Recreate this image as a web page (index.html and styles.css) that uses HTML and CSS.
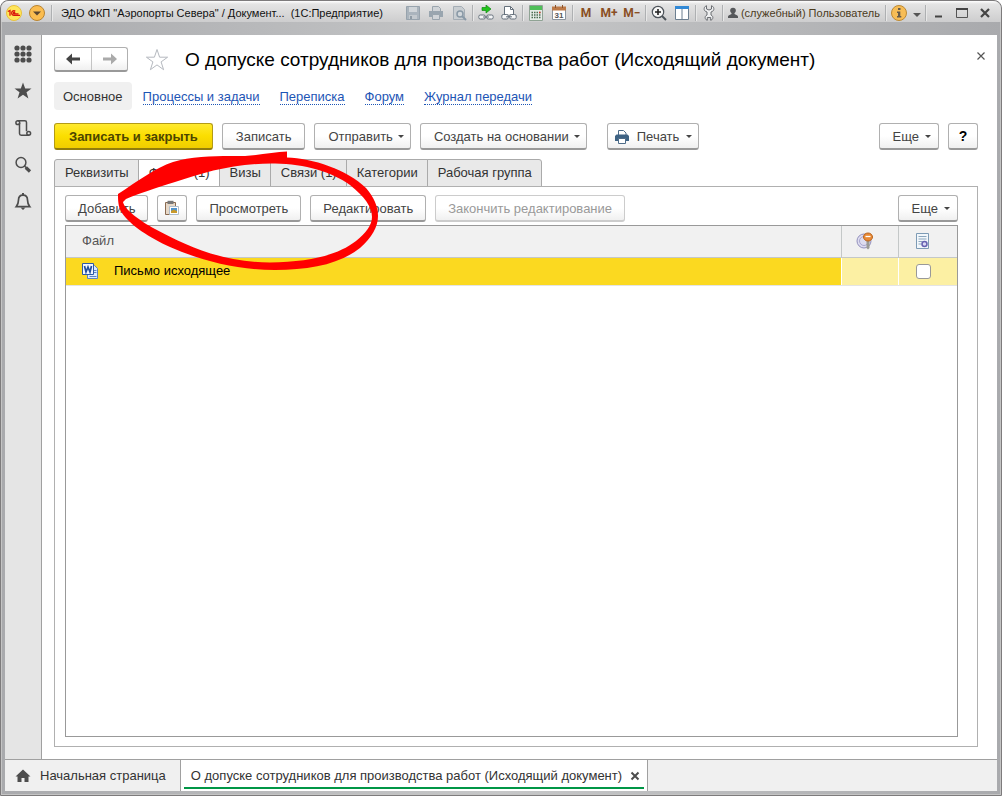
FILE: index.html
```html
<!DOCTYPE html>
<html lang="ru">
<head>
<meta charset="utf-8">
<title>ЭДО ФКП "Аэропорты Севера"</title>
<link rel="stylesheet" href="styles.css">
</head>
<body>
<div class="window">
  <header class="titlebar">
    <svg class="round" viewBox="0 0 16 16"><circle cx="8" cy="8" r="7.500" fill="#ffe65a" stroke="#e8c13c"/><path d="M1.800 6.500L4 5.500V10.800M9.300 6.200a2.300 2.300 0 1 0-.8 4.100H14M8.800 8.200a.7.700 0 1 0-.8.700h4.500" fill="none" stroke="#d9150c" stroke-width="1.300"/></svg>
    <button class="tool menu" aria-label="Главное меню"><svg class="round" viewBox="0 0 16 16"><circle cx="8" cy="8" r="7.500" fill="#fbbd50" stroke="#b98431"/><path d="M4 6.500h8L8 10.500z" fill="#5b4630"/></svg></button>
    <span class="sep"></span>
    <span class="caption">ЭДО ФКП "Аэропорты Севера" / Документ...&nbsp; (1С:Предприятие)</span>
    <div class="tools">
      <button class="tool" aria-label="Сохранить" disabled><svg viewBox="0 0 16 16"><path d="M1.500 1.500h13v13h-13z" fill="#aab4bd" stroke="#97a3ad"/><path d="M4 2h8v5H4z" fill="#d0d5d9"/><path d="M4 10h8v4H4z" fill="#c3c9ce"/><path d="M5 11h2v3H5z" fill="#8f9ba5"/></svg></button>
      <button class="tool" aria-label="Печать" disabled><svg viewBox="0 0 16 16"><path d="M4.500 6V1.500h6l2 2V6" fill="#d0d4d8" stroke="#9aa5ae"/><path d="M1 6h14v6H1z" fill="#99a5af"/><path d="M4.500 9.500h7v5h-7z" fill="#d0d4d8" stroke="#9aa5ae"/></svg></button>
      <button class="tool" aria-label="Просмотр" disabled><svg viewBox="0 0 16 16"><path d="M2.500 1.500h8l3 3v10h-11z" fill="#c9ced2" stroke="#a4adb5"/><circle cx="9" cy="9" r="3" fill="#d3d8dc" stroke="#8999a6" stroke-width="1.500"/><path d="M11 11l4 4" stroke="#8999a6" stroke-width="2"/></svg></button>
      <span class="sep"></span>
      <button class="tool" aria-label="Перейти по ссылке"><svg viewBox="0 0 16 16"><path d="M4 2.500h4V0l5 4-5 4V5.500H4z" fill="#22c41c" stroke="#128a14" stroke-width=".7"/><rect x=".8" y="10" width="6.500" height="4" rx="1.500" fill="#f5f6f7" stroke="#66717c"/><rect x="8.700" y="10" width="6.500" height="4" rx="1.500" fill="#f5f6f7" stroke="#66717c"/><path d="M5 12h6" stroke="#66717c"/></svg></button>
      <button class="tool" aria-label="Получить ссылку"><svg viewBox="0 0 16 16"><path d="M3.500 9V1.500h6l3 3V9" fill="#fff" stroke="#66717c"/><path d="M9.500 1.500v3h3" fill="none" stroke="#66717c"/><rect x=".8" y="9.500" width="6.500" height="4.500" rx="1.500" fill="#f5f6f7" stroke="#66717c"/><rect x="8.700" y="9.500" width="6.500" height="4.500" rx="1.500" fill="#f5f6f7" stroke="#66717c"/><path d="M5 11.800h6" stroke="#66717c"/></svg></button>
      <span class="sep"></span>
      <button class="tool" aria-label="Калькулятор"><svg viewBox="0 0 16 16"><path d="M1.500 .5h13v15h-13z" fill="#e6ebe7" stroke="#8fa394"/><path d="M2 1h12v4H2z" fill="#4fbf58"/><path d="M3.500 7.500h9M3.500 10h9M3.500 12.500h9" stroke="#4c6b52" stroke-width="1.500" stroke-dasharray="1.500 1"/><path d="M11 7.500h1.500" stroke="#e03a2c" stroke-width="1.500"/></svg></button>
      <button class="tool" aria-label="Календарь"><svg viewBox="0 0 16 16"><path d="M1.500 2.500h13v12h-13z" fill="#fff" stroke="#8b959e"/><path d="M1 1.500h14v4H1z" fill="#bd7947"/><path d="M4.500 0v3M11.500 0v3" stroke="#8b532b"/><text x="8" y="13" class="day">31</text></svg></button>
      <span class="sep"></span>
      <button class="tool mem">M</button>
      <button class="tool mem">M+</button>
      <button class="tool mem">M−</button>
      <span class="sep"></span>
      <button class="tool" aria-label="Масштаб"><svg viewBox="0 0 16 16"><circle cx="7" cy="7" r="5.700" fill="#f7f7f7" stroke="#4d535a" stroke-width="1.200"/><path d="M4 7h6M7 4v6" stroke="#222" stroke-width="1.600"/><path d="M11 11l4 4" stroke="#4d535a" stroke-width="2"/></svg></button>
      <button class="tool" aria-label="Панели"><svg viewBox="0 0 16 16"><path d="M1.500 1.500h13v13h-13z" fill="#fff" stroke="#6d7f90"/><path d="M1 1h14v3H1z" fill="#3189d6"/><path d="M8 4v11" stroke="#6d7f90"/></svg></button>
      <span class="sep"></span>
      <button class="tool" aria-label="Настройки"><svg viewBox="0 0 16 16"><path d="M5.500 .7C3.500 1.500 3 3 3.200 4.500c.2 1.300 1.300 2 2.800 2.500v3c-1.500.6-2.200 2-1.700 3.500.3.900 1 1.500 2 1.800v-2.800h3.400v2.800c1-.3 1.700-.9 2-1.800.5-1.500-.2-2.900-1.700-3.500V7c1.500-.5 2.600-1.200 2.800-2.500.2-1.500-.3-3-2.300-3.800V4l-2.500 1L5.500 4z" fill="#eeeff0" stroke="#6b6e73"/></svg></button>
      <span class="sep"></span>
      <button class="tool user"><svg viewBox="0 0 10 12"><circle cx="5" cy="3.500" r="2.800" fill="#56585b"/><path d="M0 11V9.500C.5 8 2.500 7.500 3.500 7V5h3v2c1 .5 3 1 3.500 2.500V11z" fill="#56585b"/></svg>(служебный) Пользователь</button>
      <span class="sep"></span>
      <button class="tool" aria-label="О программе"><svg class="round" viewBox="0 0 16 16"><circle cx="8" cy="8" r="7.500" fill="#f7bd56" stroke="#bd8932"/><path d="M7 3h2.500v2H7zM6 6.500h3.300V11h1v1.500H6V11h1V8H6z" fill="#665b4a"/></svg></button>
      <button class="tool drop" aria-label="Ещё"><svg viewBox="0 0 10 10"><path d="M1 5h8L5 9z" fill="#555"/></svg></button>
      <span class="sep"></span>
      <button class="tool" aria-label="Свернуть"><svg viewBox="0 0 16 16"><path d="M4 11.500h7" stroke="#444" stroke-width="2"/></svg></button>
      <button class="tool" aria-label="Развернуть"><svg viewBox="0 0 16 16"><path d="M2.500 3.500h11v9h-11z" fill="none" stroke="#555"/><path d="M2 4h12" stroke="#444" stroke-width="2"/></svg></button>
      <button class="tool" aria-label="Закрыть"><svg viewBox="0 0 16 16"><path d="M4 4l8 8M12 4l-8 8" stroke="#444" stroke-width="2.200"/></svg></button>
    </div>
  </header>

  <div class="client">
    <nav class="rail">
      <button class="railbtn" aria-label="Разделы"><svg viewBox="0 0 20 20"><g fill="#4d4d4d"><circle cx="4" cy="4" r="2.600"/><circle cx="10" cy="4" r="2.600"/><circle cx="16" cy="4" r="2.600"/><circle cx="4" cy="10" r="2.600"/><circle cx="10" cy="10" r="2.600"/><circle cx="16" cy="10" r="2.600"/><circle cx="4" cy="16" r="2.600"/><circle cx="10" cy="16" r="2.600"/><circle cx="16" cy="16" r="2.600"/></g></svg></button>
      <button class="railbtn" aria-label="Избранное"><svg viewBox="0 0 20 20"><path d="M10 1.500l2.200 6h6.300l-5 3.700 1.900 6.300-5.400-3.800-5.400 3.800 1.900-6.300-5-3.700h6.300z" fill="#4d4d4d"/></svg></button>
      <button class="railbtn" aria-label="История"><svg viewBox="0 0 20 20"><g fill="none" stroke="#4d4d4d" stroke-width="1.500"><path d="M4.500 2.700h7.300q1.700 0 1.700 1.700v8.800M6.500 5v10.500q0 1.700 1.700 1.700H16"/><circle cx="4.800" cy="4.700" r="1.900"/><circle cx="15.700" cy="15.300" r="1.900"/></g></svg></button>
      <button class="railbtn" aria-label="Поиск"><svg viewBox="0 0 20 20"><circle cx="8" cy="7.500" r="4.900" fill="none" stroke="#4d4d4d" stroke-width="1.500"/><path d="M11.500 11l2 2" stroke="#4d4d4d" stroke-width="1.500"/><path d="M12.800 12.500l4.200 4" stroke="#4d4d4d" stroke-width="3.200"/></svg></button>
      <button class="railbtn" aria-label="Оповещения"><svg viewBox="0 0 20 20"><path d="M10 3.200C6.500 3.200 5.500 5.500 5.500 8c0 3.500-1 5-2.300 6.700h13.600C15.500 13 14.500 11.500 14.500 8c0-2.500-1-4.800-4.500-4.800z" fill="none" stroke="#4d4d4d" stroke-width="1.700"/><path d="M9 1h2v2H9zM7.500 15.500h5L10 18z" fill="#4d4d4d"/></svg></button>
    </nav>

    <main class="form">
      <div class="heading">
        <div class="history">
          <button aria-label="Назад"><svg viewBox="0 0 16 12"><path d="M7 .5V4.500h8v3H7v4L1 6z" fill="#444"/></svg></button>
          <button aria-label="Вперёд" disabled><svg viewBox="0 0 16 12"><path d="M9 .5V4.500H1v3h8v4L15 6z" fill="#aaa"/></svg></button>
        </div>
        <button class="fav" aria-label="В избранное"><svg viewBox="0 0 24 24"><path d="M12 1.500l2.600 7.700h8l-6.500 4.700 2.500 7.800-6.600-4.800-6.600 4.800 2.500-7.800L1.400 9.200h8z" fill="#fff" stroke="#b5b9bf"/></svg></button>
        <h1>О допуске сотрудников для производства работ (Исходящий документ)</h1>
        <button class="close" aria-label="Закрыть форму"><svg viewBox="0 0 10 10"><path d="M1.500 1.500l7 7M8.500 1.500l-7 7" stroke="#555" stroke-width="1.200"/></svg></button>
      </div>

      <nav class="links">
        <span class="current">Основное</span>
        <a href="#">Процессы и задачи</a>
        <a href="#">Переписка</a>
        <a href="#">Форум</a>
        <a href="#">Журнал передачи</a>
      </nav>

      <div class="commands">
        <button class="btn primary">Записать и закрыть</button>
        <button class="btn">Записать</button>
        <button class="btn more">Отправить</button>
        <button class="btn more">Создать на основании</button>
        <button class="btn more print"><svg viewBox="0 0 16 16"><path d="M4.500 6V1.500h5l2.500 2.500v2" fill="#fff" stroke="#4c6b88"/><path d="M1 7l1.500-1.500h11L15 7v5H1z" fill="#3e6384"/><path d="M4.500 9.500h7v5h-7z" fill="#fff" stroke="#4c6b88"/></svg>Печать</button>
        <button class="btn more push">Еще</button>
        <button class="btn help">?</button>
      </div>

      <div class="tabs" role="tablist">
        <button role="tab">Реквизиты</button>
        <button role="tab" class="active" aria-selected="true">Файлы (1)</button>
        <button role="tab">Визы</button>
        <button role="tab">Связи (1)</button>
        <button role="tab">Категории</button>
        <button role="tab">Рабочая группа</button>
      </div>

      <section class="page">
        <div class="commands files">
          <button class="btn">Добавить</button>
          <button class="btn paste" aria-label="Вставить из буфера"><svg viewBox="0 0 16 16"><path d="M1.500 2.500h10v12h-10z" fill="#e6d8c8" stroke="#8a6a50"/><path d="M3.500 .8h6V4h-6z" fill="#777"/><path d="M5.500 6.500h9v8h-9z" fill="#fff" stroke="#aebdcb"/><path d="M7 8h6v3H7z" fill="#4d93d0"/><path d="M7 11l2.500-1.500L13 11v2H7z" fill="#c99a2b"/></svg></button>
          <button class="btn">Просмотреть</button>
          <button class="btn">Редактировать</button>
          <button class="btn" disabled>Закончить редактирование</button>
          <button class="btn more push">Еще</button>
        </div>
        <div class="list">
          <table>
            <colgroup><col><col class="c-sign"><col class="c-mark"></colgroup>
            <thead>
              <tr>
                <th>Файл</th>
                <th class="icon"><svg viewBox="0 0 18 18" aria-label="Подпись"><circle cx="8" cy="9" r="7" fill="#dddcef" stroke="#9390bd"/><circle cx="8" cy="9" r="4.500" fill="none" stroke="#aaa7cf"/><path d="M10.500 7h3v9l-1.500 1.500-1.500-1.500z" fill="#9a9a94"/><ellipse cx="12" cy="5" rx="4.500" ry="4" fill="#e98a35" stroke="#b9651f"/><path d="M9.500 4.500h5" stroke="#fff" stroke-width="1.300"/></svg></th>
                <th class="icon"><svg viewBox="0 0 18 18" aria-label="Отметка"><path d="M2.500 1.500h12v15h-12z" fill="#f2f7fb" stroke="#7d9bb5"/><path d="M4.500 4.500h8M4.500 7h8M4.500 9.500h4M4.500 12h3" stroke="#8ba6bd"/><circle cx="10.500" cy="12" r="2.500" fill="#d9d8f4" stroke="#6561b0" stroke-width="1.500"/></svg></th>
              </tr>
            </thead>
            <tbody>
              <tr>
                <td><span class="file"><svg viewBox="0 0 16 16"><path d="M5.500 2.500h7l3 3v10h-10z" fill="#dceaff" stroke="#5d83c1"/><path d="M11.500 7.500h3M11.500 9.500h3M7.500 13.500h7" stroke="#5d83c1"/><path d="M.5.500h11v11H.5z" fill="#f1f6ff" stroke="#2c59a8"/><path d="M2.500 3l1.500 6 2-5 2 5 1.500-6" fill="none" stroke="#214e9f" stroke-width="1.700"/></svg>Письмо исходящее</span></td>
                <td class="soft"></td>
                <td class="soft icon"><input type="checkbox" aria-label="Отметка файла"></td>
              </tr>
            </tbody>
          </table>
        </div>
      </section>
    </main>
  </div>

  <footer class="taskbar">
    <button class="task"><svg viewBox="0 0 16 16"><path d="M8 1.500L.5 8.500h2V14h4v-4h3v4h4V8.500h2z" fill="#4d4d4d"/></svg>Начальная страница</button>
    <button class="task open"><span>О допуске сотрудников для производства работ (Исходящий документ)</span><svg class="x" viewBox="0 0 10 10"><path d="M1.500 1.500l7 7M8.500 1.500l-7 7" stroke="#4d4d4d" stroke-width="2"/></svg></button>
  </footer>
</div>
<svg class="marker" viewBox="0 0 280 130"><path fill="#f00" fill-rule="evenodd" d="M177 6.500V12.500C202 13 238 25 256 43C264 52 268 62 268 71C268 82 262 92 250 103C230 119 200 125 165 125C125 125 90 115 60 102C40 93 20 80 12 68C8 62 8 55 8 49C28 36 45 23 63 17C85 10 115 11 135 11C150 10 165 7 177 6.500ZM165 18.500C125 18 95 27 65 37C45 43 28 49 16 54L13 57C14 64 30 76 45 84C75 100 110 117 160 117.500C200 117 228 110 246 96C256 88 262 80 262 72C262 62 255 52 240 40C222 27 195 19 165 18.500Z"/></svg>
</body>
</html>
```
FILE: styles.css
```css
* { box-sizing: border-box; }
html, body { height: 100%; }
body {
  margin: 0;
  background: #fff;
  color: #333;
  font: 13px/16px "Liberation Sans", Arial, sans-serif;
}
button { font: inherit; color: inherit; margin: 0; padding: 0; border: 0; background: none; white-space: nowrap; }
svg { display: block; flex: none; }

.window {
  display: flex;
  flex-direction: column;
  height: 100vh;
  padding: 0 4px 4px;
  border: 1px solid #7d7b7c;
  border-radius: 8px 8px 0 0;
  background: linear-gradient(90deg, #a9aaad, #c6c7c8 50%, #a9aaad);
  box-shadow: inset 0 0 0 1px #c4c4c4;
}

.titlebar {
  display: flex;
  align-items: center;
  height: 34px;
  flex: none;
  margin: 0 -4px;
  padding: 0 6px 10px 5px;
  border-radius: 8px 8px 0 0;
  background: linear-gradient(#fff, #e4e4e4 3px, #cdcdce 21px, transparent 21px);
  font-size: 11px;
}
.titlebar .sep { width: 1px; height: 16px; background: #aeb0b2; box-shadow: 1px 0 #e8e8e8; flex: none; }
.round { width: 16px; height: 16px; }
.menu { margin: 0 4px 0 5px; }
.caption { margin-left: 9px; color: #111; white-space: nowrap; flex: 1 1 0; overflow: hidden; }
.tools { display: flex; align-items: center; gap: 3px; }
.tool { display: flex; align-items: center; justify-content: center; gap: 3px; height: 20px; min-width: 20px; }
.tool svg { width: 16px; height: 16px; }
.mem { color: #8a4f24; font: bold 12px/16px Roboto, "Liberation Sans", sans-serif; }
.user { color: #4b3b1c; padding: 0 2px; }
.user svg { width: 10px; height: 12px; }
.drop { min-width: 10px; }
.drop svg { width: 10px; height: 10px; }
.day { font: bold 8px "Liberation Sans", Arial, sans-serif; text-anchor: middle; fill: #555; }

.client { display: flex; flex: 1; min-height: 0; }
.rail {
  display: flex;
  flex-direction: column;
  align-items: center;
  gap: 17px;
  width: 37px;
  flex: none;
  padding-top: 9px;
  background: #e5e5e5;
  border-right: 1px solid #a0a0a0;
}
.railbtn svg { width: 20px; height: 20px; }

.form {
  display: flex;
  flex-direction: column;
  flex: 1;
  min-width: 0;
  padding: 12px 19px 12px 12px;
  background: #fff;
}
.heading { display: flex; align-items: center; height: 25px; }
.history { display: flex; border: 1px solid #b0b0b0; border-bottom: 2px solid #999; border-radius: 3px; height: 25px; background: linear-gradient(#fff 50%, #f0f0f0); }
.history button { display: flex; align-items: center; justify-content: center; width: 36px; }
.history button + button { border-left: 1px solid #c4c4c4; }
.history svg { width: 16px; height: 12px; }
.fav { margin: 0 16px 0 17px; }
.fav svg { width: 24px; height: 24px; }
h1 { margin: 0; font-size: 19px; line-height: 24px; font-weight: normal; color: #000; white-space: nowrap; }
.close { margin: 0 -8px 8px auto; }
.close svg { width: 10px; height: 10px; }

.links { display: flex; align-items: center; gap: 20px; margin-top: 10px; height: 28px; }
.current { padding: 7px 9px 5px; margin-right: -9px; background: #f0f0f0; border-radius: 4px; }
.links a { padding-top: 2px; color: #1d55b5; text-decoration: none; border-bottom: 1px dotted #1d55b5; line-height: 14px; }

.commands { display: flex; align-items: center; gap: 9px; margin-top: 13px; }
.btn {
  display: flex;
  align-items: center;
  justify-content: center;
  height: 27px;
  padding: 1px 13px 0;
  border: 1px solid #b0b0b0;
  border-bottom: 2px solid #999;
  border-radius: 3px;
  background: linear-gradient(#fff 50%, #f0f0f0);
  color: #444;
}
.btn:disabled { color: #999; border-color: #ccc; }
.primary { padding: 1px 14px 0; background: linear-gradient(#ffea2e, #fbde00 50%, #f0cd00); border-color: #b39b16; border-bottom-color: #927d0c; font-weight: bold; color: #4c4500; }
.more { padding-right: 6px; }
.more::after { content: ""; border: 3px solid transparent; border-top-color: #444; border-bottom: 0; margin-left: 5px; }
.print { margin-left: 11px; padding-left: 6px; gap: 7px; }
.print::after { margin-left: 0; }
.print svg, .paste svg { width: 16px; height: 16px; }
.push { margin-left: auto; padding-right: 7px; gap: 1px; }
.help { width: 30px; padding: 0; color: #000; font-size: 14px; font-weight: bold; }
.files { margin: 0; }
.files .btn { padding-left: 12px; padding-right: 12px; }
.files .push { padding-left: 13px; padding-right: 7px; }
.files .paste { width: 30px; padding: 0; }

.tabs { display: flex; margin: 9px 0 -1px; }
.tabs button { height: 28px; padding: 0 9px 0 10px; border: 1px solid #aaa; margin-right: -1px; background: #e9e9e9; color: #333; }
.tabs button:first-child { border-top-left-radius: 3px; }
.tabs button:last-child { border-top-right-radius: 3px; }
.tabs .active { background: #fff; border-bottom-color: #fff; }

.page { display: flex; flex-direction: column; flex: 1; padding: 8px 19px 9px 10px; border: 1px solid #b0b0b0; }
.list { flex: 1; margin-top: 3px; border: 1px solid #999; }
table { width: 100%; border-collapse: collapse; table-layout: fixed; }
.c-sign { width: 57px; }
.c-mark { width: 59px; }
th { height: 31px; padding: 0 16px; text-align: left; font-weight: normal; color: #555; background: #f1f1f1; border: 1px solid #c4c8c8; border-width: 0 0 1px 1px; }
th:first-child { border-left: 0; }
td { height: 28px; padding: 0 16px; background: #fbd920; color: #000; border-top: 1px solid #fff; border-bottom: 1px solid #e4e4e4; }
.soft { background: #fcf0a3; border-left: 1px solid #fff; }
.icon { padding: 0 9px 0 0; }
th svg { width: 18px; height: 18px; margin: 0 auto; }
.file { display: flex; align-items: center; gap: 16px; }
.file svg { width: 16px; height: 16px; }
input { display: block; appearance: none; width: 15px; height: 15px; margin: 0 auto; border: 1px solid #999; border-radius: 3px; background: #fff; }

.taskbar { display: flex; height: 32px; flex: none; background: #f0f0f0; border-top: 1px solid #a0a0a0; }
.task { display: flex; align-items: center; gap: 9px; padding: 0 14px 0 10px; border-right: 1px solid #a0a0a0; color: #333; }
.task svg { width: 16px; height: 16px; }
.open { position: relative; padding: 0 7px 0 10px; gap: 8px; background: #fff; }
.open::after { content: ""; position: absolute; left: 3px; right: 3px; bottom: 2px; height: 2px; background: #009646; }
.task .x { width: 10px; height: 10px; }

.marker { position: absolute; left: 110px; top: 145px; width: 280px; height: 130px; pointer-events: none; }
```
